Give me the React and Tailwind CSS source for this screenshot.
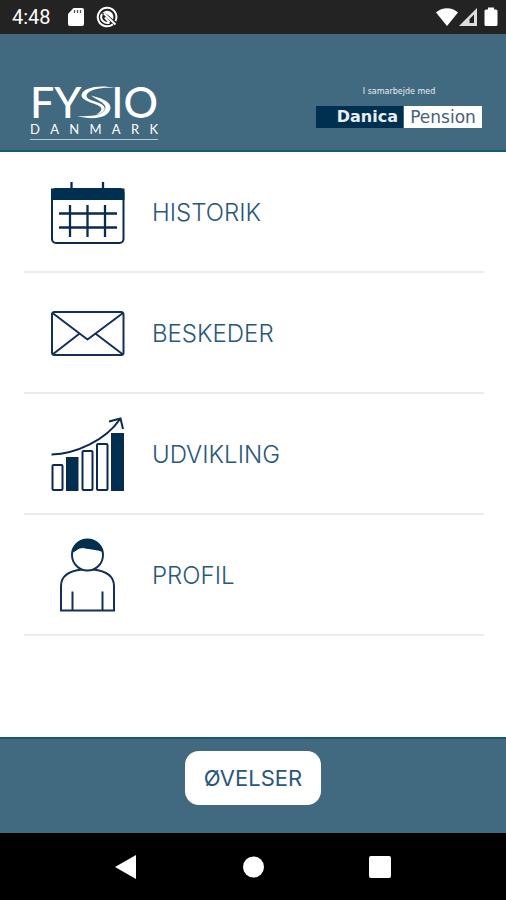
import React from "react";

const NAVY = "#00304f";

function CalendarIcon() {
  return (
    <svg viewBox="0 0 76 76" className="h-[76px] w-[76px]" fill="none" stroke="#0b2a50" strokeWidth="2" aria-hidden="true">
      <path d="M21.500 7v7M53 7v7" strokeWidth="2.300" />
      <rect x="2" y="14" width="71.500" height="54" rx="4" />
      <path d="M1 13.500h73.500v11.500H1z" fill={NAVY} stroke="none" />
      <path d="M9 38.500h58M9 52.500h58M20 30v32M37.500 30v32M55 30v32" strokeWidth="2.300" />
    </svg>
  );
}

function EnvelopeIcon() {
  return (
    <svg viewBox="0 0 76 76" className="h-[76px] w-[76px]" fill="none" stroke="#12305a" strokeWidth="2" strokeLinejoin="round" aria-hidden="true">
      <rect x="2" y="16" width="71.500" height="43" rx="2.500" />
      <path d="M2.500 17 37.500 43.500 73 17M2.500 58.500 29 38M73 58.500 46 38" />
    </svg>
  );
}

function GrowthIcon() {
  return (
    <svg viewBox="0 0 76 76" className="h-[76px] w-[76px]" fill="none" stroke="#0b2a50" strokeWidth="2" aria-hidden="true">
      <rect x="2.500" y="48" width="10" height="25" rx="1" />
      <rect x="17" y="41" width="10.500" height="32" fill={NAVY} />
      <rect x="32.500" y="34" width="10" height="39" rx="1" />
      <rect x="47" y="27" width="10.500" height="46" rx="1" />
      <rect x="62" y="17" width="11" height="56" fill={NAVY} />
      <path d="M1.500 37.500C26 37 56 23 70 2" />
      <path d="M59 4.500 70.500 1.500 73 12" />
    </svg>
  );
}

function PersonIcon() {
  return (
    <svg viewBox="0 0 76 76" className="h-[76px] w-[76px]" fill="none" stroke="#12305a" strokeWidth="2" aria-hidden="true">
      <circle cx="37.500" cy="17" r="15.500" />
      <path d="M22 14.500C24 4 31 1 37.500 1S51 4 53 14C46 11.500 42 12 33 10 28 10 27 13 22 14.500z" fill={NAVY} stroke="none" />
      <path d="M32 31.500C18 33 11 39 11 48v24.500h53V48C64 39 57 33 43 31.500" />
      <path d="M22.500 53.500v19M52.500 53.500v19" />
    </svg>
  );
}

const items = [
  { label: "HISTORIK", Icon: CalendarIcon },
  { label: "BESKEDER", Icon: EnvelopeIcon },
  { label: "UDVIKLING", Icon: GrowthIcon },
  { label: "PROFIL", Icon: PersonIcon },
];

function StatusBar() {
  return (
    <div className="flex h-[34px] items-center justify-between bg-[#232323] pr-2 pl-3 text-white">
      <div className="flex items-center">
        <span className="w-[56px] font-['Roboto',sans-serif] text-[20px] leading-6">4:48</span>
        <svg viewBox="0 0 16 20" className="h-5 w-4" aria-hidden="true">
          <path d="M5.500 1H14a2 2 0 0 1 2 2v14a2 2 0 0 1-2 2H2a2 2 0 0 1-2-2V7z" fill="#fff" />
          <path d="M6.500 3v3M9.500 3v3M12.500 3v3" stroke="#555" strokeWidth="1.300" />
        </svg>
        <svg viewBox="0 0 22 22" className="ml-3 h-[22px] w-[22px]" fill="none" stroke="#fff" aria-hidden="true">
          <path d="M17 18.200A9.300 9.300 0 1 1 19.500 15" strokeWidth="2" />
          <path d="M17 13.500A6.300 6.300 0 0 0 6 7.500C10 6.500 12 9 17 13.500z" fill="#fff" stroke="none" />
          <path d="M6 8A6 6 0 0 0 13.500 16.500M9 11.500l4.500 5M8 7.500 19.500 18.500" strokeWidth="2" />
        </svg>
      </div>
      <div className="flex items-center">
        <svg viewBox="0 0 22 20" className="h-5 w-[22px]" aria-hidden="true">
          <path d="M0 5.500C6-.3 16-.3 22 5.500L11 19z" fill="#fff" />
        </svg>
        <svg viewBox="0 0 20 20" className="h-5 w-5" aria-hidden="true">
          <path d="M19 1v18H1z" fill="#ddd" />
          <path d="M16 7.500v8.500h-4.500v-4z" fill="#232323" />
        </svg>
        <svg viewBox="0 0 14 20" className="ml-[6px] h-5 w-[14px]" aria-hidden="true">
          <path d="M4 .5h6V2.500h2a1.500 1.500 0 0 1 1.500 1.500v13.500a1.500 1.500 0 0 1-1.500 1.500H2A1.500 1.500 0 0 1 .5 17.500V4A1.500 1.500 0 0 1 2 2.500h2z" fill="#fff" />
        </svg>
      </div>
    </div>
  );
}

function FysioLogo() {
  return (
    <div className="w-32 text-white">
      <div className="flex h-9 items-center justify-between font-['Lato',sans-serif] text-[43px] leading-9 font-medium">
        <span>FY</span>
        <svg viewBox="0 0 38 34" className="-mx-2 h-[34px] w-[38px] shrink-0" fill="#fff" role="img" aria-label="S">
          <path d="M38 3C24-.5 6 2 4.500 10 4 16 16 17.500 23 21.500 26 24 24 27 19 29.500 28 27.500 30 23 25 19.500 19 16 9 15 9.500 10.500 11 4 26 2 38 3z" />
          <path d="M14 10.500C23 13 34 16 33.500 23 32 33 16 35.500 0 31 14 32 28 30 28.500 22.500 28 17 19 15 14 10.500z" />
        </svg>
        <span>IO</span>
      </div>
      <div className="mt-px flex justify-between border-b border-[#b7cbd6] pb-[2px] font-['Lato',sans-serif] text-[13px] leading-4">
        {"DANMARK".split("").map((letter, i) => (
          <span key={i}>{letter}</span>
        ))}
      </div>
    </div>
  );
}

function DanicaLogo() {
  return (
    <div className="flex flex-col items-center font-['DejaVu_Sans',sans-serif]">
      <p className="text-[8px] leading-3 text-[#e6eef2]">I samarbejde med</p>
      <div className="mt-2 flex h-[22px] w-[166px] leading-[22px]">
        <span className="w-[87px] bg-[#00304f] pr-[5px] text-right text-base leading-[22px] font-bold text-[#e8eef2]">Danica</span>
        <span className="ml-px flex-1 bg-white text-center text-[17px] leading-[22px] text-[#46607a]">Pension</span>
      </div>
    </div>
  );
}

export default function App() {
  return (
    <div className="flex min-h-screen flex-col bg-white font-['Inter',sans-serif]">
      <StatusBar />
      <header className="flex h-[118px] items-end justify-between border-b-2 border-[#175a78] bg-[#41697f] pr-6 pl-[30px]">
        <div className="pb-[10px]">
          <FysioLogo />
        </div>
        <div className="pb-[22px]">
          <DanicaLogo />
        </div>
      </header>

      <main className="flex-1 pr-[22px] pl-6">
        <nav>
          <ul>
            {items.map(({ label, Icon }) => (
              <li key={label} className="border-b-2 border-[#ebebeb]">
                <a href="#" className="flex h-[119px] items-center gap-[26px] pt-[2px] pl-[26px] text-2xl font-light text-[#28587a]">
                  <Icon />
                  <span>{label}</span>
                </a>
              </li>
            ))}
          </ul>
        </nav>
      </main>

      <footer className="flex h-24 items-start justify-center border-t-2 border-[#175a78] bg-[#41697f] pt-3">
        <button type="button" className="h-[54px] rounded-[14px] bg-white px-[19px] text-[22px] text-[#28587a]">
          ØVELSER
        </button>
      </footer>

      <div className="flex h-[67px] items-center justify-center gap-[103px] bg-black">
        <button type="button" aria-label="Back">
          <svg viewBox="0 0 24 24" className="h-6 w-6" fill="#fff">
            <path d="M1 12 22 0v24z" />
          </svg>
        </button>
        <button type="button" aria-label="Home">
          <svg viewBox="0 0 24 24" className="h-6 w-6" fill="#fff">
            <circle cx="12.500" cy="12" r="10.500" />
          </svg>
        </button>
        <button type="button" aria-label="Recent apps">
          <svg viewBox="0 0 24 24" className="h-6 w-6" fill="#fff">
            <rect x="1" y="1" width="22" height="22" rx="2" />
          </svg>
        </button>
      </div>
    </div>
  );
}
